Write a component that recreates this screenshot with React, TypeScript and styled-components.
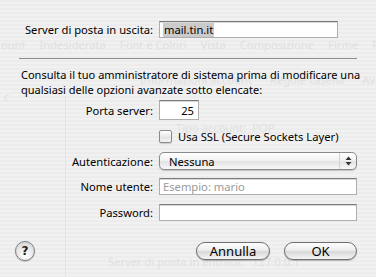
import React from "react";
import styled, { createGlobalStyle } from "styled-components";

const GlobalStyle = createGlobalStyle`
  html, body {
    margin: 0;
    padding: 0;
  }
  body {
    font-family: "Noto Sans", "DejaVu Sans", sans-serif;
    font-size: 11.2px;
    color: #000;
  }
`;

const Window = styled.div`
  position: relative;
  width: 376px;
  height: 277px;
  overflow: hidden;
  background: repeating-linear-gradient(
    to bottom,
    #ececec 0px,
    #ececec 2px,
    #f1f1f1 2px,
    #f1f1f1 4px
  );
`;

/* ghosted preferences window behind the sheet */
const Backdrop = styled.div`
  color: #e0e0e0;
  font-size: 11.2px;
  white-space: nowrap;
`;

const GhostToolbar = styled.div`
  display: flex;
  gap: 14px;
  padding: 37px 0 0 0;
  margin-left: -17px;
  height: 16px;
`;

const GhostTabs = styled.div`
  display: flex;
  gap: 18px;
  padding: 19px 0 0 140px;
`;

const GhostLine = styled.div<{ $pad: string }>`
  padding: ${(p) => p.$pad};
`;

const Sidebar = styled.div`
  position: absolute;
  left: 65px;
  top: 96px;
  bottom: 0;
  width: 1px;
  background: #e3e3e3;
`;

const Sheet = styled.div`
  position: absolute;
  inset: 0;
  padding: 21px 19px 0 0;
  display: flex;
  flex-direction: column;
`;

const Row = styled.div<{ $mt?: number; $h: number }>`
  display: grid;
  grid-template-columns: 153px 1fr;
  column-gap: 6px;
  align-items: center;
  margin-top: ${(p) => p.$mt ?? 0}px;
  height: ${(p) => p.$h}px;
`;

const Label = styled.label`
  text-align: right;
  white-space: nowrap;
`;

const Field = styled.div<{ $w?: number; $right?: boolean }>`
  box-sizing: border-box;
  height: 100%;
  width: ${(p) => (p.$w ? `${p.$w}px` : "auto")};
  background: #fff;
  border: 1px solid #adadad;
  border-top-color: #7a7a7a;
  box-shadow: inset 0 1px 0 #d8d8d8;
  display: flex;
  align-items: center;
  justify-content: ${(p) => (p.$right ? "flex-end" : "flex-start")};
  padding: 0 4px 0 3px;
  white-space: nowrap;
`;

const Selected = styled.span`
  background: #cbcbcb;
  padding: 0 1px;
  line-height: 14px;
`;

const Placeholder = styled.span`
  color: #9a9a9a;
`;

const Separator = styled.div`
  margin: 20px 0 0 19px;
  height: 1px;
  background: #8e8e8e;
`;

const Note = styled.p`
  margin: 8px 0 0 21px;
  line-height: 15px;
  font-size: 11px;
  white-space: nowrap;
`;

const CheckLabel = styled.label`
  display: flex;
  align-items: center;
  gap: 6px;
  white-space: nowrap;
`;

const CheckBox = styled.span`
  box-sizing: border-box;
  width: 13px;
  height: 13px;
  border: 1px solid #8a8a8a;
  border-radius: 2px;
  background: linear-gradient(#ffffff, #e4e4e4 60%, #f4f4f4);
  box-shadow: 0 1px 1px rgba(0, 0, 0, 0.15);
`;

const Popup = styled.div`
  box-sizing: border-box;
  height: 100%;
  display: flex;
  align-items: center;
  border: 1px solid #8a8a8a;
  border-radius: 5px;
  background: linear-gradient(#ffffff, #f3f3f3 45%, #e2e2e2 55%, #f8f8f8);
  box-shadow: 0 1px 1px rgba(0, 0, 0, 0.2);
`;

const PopupText = styled.span`
  flex: 1;
  padding-left: 9px;
`;

const PopupArrows = styled.span`
  width: 16px;
  height: 100%;
  display: flex;
  align-items: center;
  justify-content: center;
  border-left: 1px solid #d2d2d2;
`;

const Footer = styled.div`
  margin-top: 20px;
  display: flex;
  align-items: center;
  padding-left: 15px;
`;

const HelpButton = styled.button`
  box-sizing: border-box;
  width: 20px;
  height: 20px;
  border-radius: 50%;
  border: 1px solid #7c7c7c;
  background: radial-gradient(circle at 50% 75%, #ffffff, #e6e6e6 55%, #cfcfcf);
  box-shadow: 0 1px 1px rgba(0, 0, 0, 0.2);
  font-family: "DejaVu Sans", sans-serif;
  font-weight: bold;
  font-size: 12px;
  line-height: 18px;
  padding: 0;
  color: #1e1e1e;
`;

const Buttons = styled.div`
  margin-left: auto;
  display: flex;
  gap: 14px;
`;

const PushButton = styled.button<{ $w: number }>`
  box-sizing: border-box;
  width: ${(p) => p.$w}px;
  height: 18px;
  border-radius: 9px;
  border: 1px solid #6e6e6e;
  background: linear-gradient(#fdfdfd, #eeeeee 45%, #d9d9d9 55%, #f5f5f5);
  box-shadow: 0 1px 1px rgba(0, 0, 0, 0.25);
  font-family: "Noto Sans", "DejaVu Sans", sans-serif;
  font-size: 13px;
  line-height: 16px;
  padding: 0;
  color: #000;
`;

function Arrows() {
  return (
    <svg width="7" height="10" viewBox="0 0 7 10">
      <path d="M3.5 0.5 L6.5 4 L0.5 4 Z" fill="#333" />
      <path d="M3.5 9.5 L6.5 6 L0.5 6 Z" fill="#333" />
    </svg>
  );
}

export default function App() {
  return (
    <>
      <GlobalStyle />
      <Window>
        <Backdrop>
          <GhostToolbar>
            <span>Account</span>
            <span>Indesiderata</span>
            <span>Font e Colori</span>
            <span>Vista</span>
            <span>Composizione</span>
            <span>Firme</span>
            <span>Regole</span>
          </GhostToolbar>
          <GhostTabs>
            <span>Informazioni account</span>
            <span>Regole casella</span>
            <span>Avanzate</span>
          </GhostTabs>
          <GhostLine $pad="2px 0 0 4px">c</GhostLine>
          <GhostLine $pad="16px 0 0 176px">Tipo account:&nbsp;&nbsp;POP</GhostLine>
          <GhostLine $pad="119px 0 0 108px">
            Server di posta in entrata:&nbsp;&nbsp;&nbsp;127.0.0.1
          </GhostLine>
          <Sidebar />
        </Backdrop>

        <Sheet>
          <Row $h={17}>
            <Label>Server di posta in uscita:</Label>
            <Field $w={179}>
              <Selected>mail.tin.it</Selected>
            </Field>
          </Row>

          <Separator />

          <Note>
            Consulta il tuo amministratore di sistema prima di modificare una
            <br />
            qualsiasi delle opzioni avanzate sotto elencate:
          </Note>

          <Row $mt={3} $h={20}>
            <Label>Porta server:</Label>
            <Field $w={40} $right>
              25
            </Field>
          </Row>

          <Row $mt={9} $h={14}>
            <span />
            <CheckLabel>
              <CheckBox />
              Usa SSL (Secure Sockets Layer)
            </CheckLabel>
          </Row>

          <Row $mt={9} $h={18}>
            <Label>Autenticazione:</Label>
            <Popup>
              <PopupText>Nessuna</PopupText>
              <PopupArrows>
                <Arrows />
              </PopupArrows>
            </Popup>
          </Row>

          <Row $mt={8} $h={17}>
            <Label>Nome utente:</Label>
            <Field>
              <Placeholder>Esempio: mario</Placeholder>
            </Field>
          </Row>

          <Row $mt={9} $h={17}>
            <Label>Password:</Label>
            <Field />
          </Row>

          <Footer>
            <HelpButton>?</HelpButton>
            <Buttons>
              <PushButton $w={74}>Annulla</PushButton>
              <PushButton $w={73}>OK</PushButton>
            </Buttons>
          </Footer>
        </Sheet>
      </Window>
    </>
  );
}
